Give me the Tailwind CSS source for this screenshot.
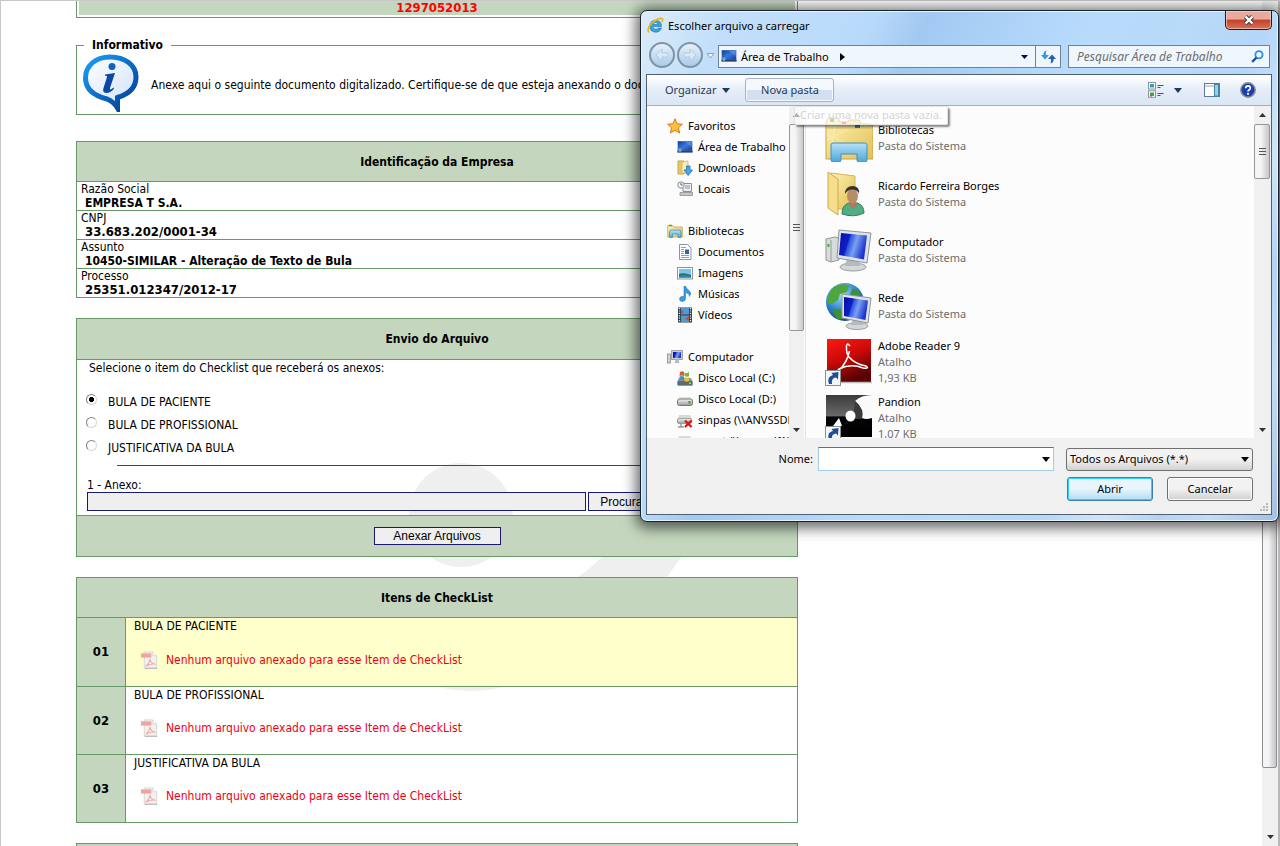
<!DOCTYPE html>
<html lang="pt-BR">
<head>
<meta charset="utf-8">
<title>Peticionamento - Envio de Arquivos</title>
<script src="https://cdn.jsdelivr.net/npm/@tailwindcss/browser@4"></script>
</head>
<body class="bg-white text-black">
<svg width="0" height="0" class="absolute" aria-hidden="true">
  <defs>
    <linearGradient id="gBubble" x1="0" y1="0" x2="1" y2="1"><stop offset="0" stop-color="#18a0f5"/><stop offset="1" stop-color="#023a96"/></linearGradient>
    <linearGradient id="gBubbleIn" x1="0" y1="0" x2="1" y2="1"><stop offset="0" stop-color="#ffffff"/><stop offset="1" stop-color="#cfe2fa"/></linearGradient>
    <linearGradient id="gFolder" x1="0" y1="0" x2="1" y2="1"><stop offset="0" stop-color="#fdf3b4"/><stop offset="1" stop-color="#e3bf52"/></linearGradient>
    <linearGradient id="gBlueTray" x1="0" y1="0" x2="0" y2="1"><stop offset="0" stop-color="#b8e2f6"/><stop offset="1" stop-color="#4ba6dc"/></linearGradient>
    <linearGradient id="gScreen" x1="0" y1="0" x2="1" y2=".3"><stop offset="0" stop-color="#0710a4"/><stop offset=".38" stop-color="#0f1fc4"/><stop offset=".42" stop-color="#2c50e0"/><stop offset=".65" stop-color="#7aa0f2"/><stop offset="1" stop-color="#1c36cc"/></linearGradient>
    <linearGradient id="gGray" x1="0" y1="0" x2="0" y2="1"><stop offset="0" stop-color="#f4f4f4"/><stop offset="1" stop-color="#9a9a9a"/></linearGradient>
    <linearGradient id="gRed" x1="0" y1="0" x2=".4" y2="1"><stop offset="0" stop-color="#fb1a12"/><stop offset=".5" stop-color="#cc0a08"/><stop offset="1" stop-color="#5a0303"/></linearGradient>
    <linearGradient id="gDark" x1="0" y1="0" x2="0" y2="1"><stop offset="0" stop-color="#3a3a3a"/><stop offset=".5" stop-color="#6a6a6a"/><stop offset=".52" stop-color="#050505"/><stop offset="1" stop-color="#000"/></linearGradient>
    <radialGradient id="gGlobe" cx=".4" cy=".3" r=".75"><stop offset="0" stop-color="#9bdcf8"/><stop offset=".6" stop-color="#2b7fd0"/><stop offset="1" stop-color="#10408c"/></radialGradient>
    <linearGradient id="gDesk" x1="0" y1="0" x2="1" y2="1"><stop offset="0" stop-color="#0e3a94"/><stop offset=".5" stop-color="#3a78dc"/><stop offset="1" stop-color="#123f9e"/></linearGradient>
    <symbol id="desk" viewBox="0 0 16 16"><rect x=".5" y="2" width="15" height="11.5" fill="#6f8fc4"/><rect x="1" y="2.500" width="14" height="9" fill="url(#gDesk)"/><rect x=".5" y="11.500" width="15" height="2" fill="#2c3f6c"/><path d="M8 3h6.500v5z" fill="#6da2ee" opacity=".5"/><circle cx="3" cy="11" r="1.800" fill="#3fb4e8"/><path d="M2 12.500l1-2 1 2z" fill="#f2a032"/></symbol>
    <symbol id="libs" viewBox="0 0 16 16"><path d="M.7 2.500h5l1 1.500h8.600v10H.7z" fill="url(#gFolder)" stroke="#c9a446" stroke-width=".8"/><path d="M2 2.500h3" stroke="#3aa648" stroke-width="1.500"/><path d="M2.500 14.500V9q0-2 2-2h7.500q2 0 2 2v5.500h-3V11h-5.500v3.500z" fill="url(#gBlueTray)" stroke="#3c8fc6" stroke-width=".8"/></symbol>
    <symbol id="driveNet" viewBox="0 0 16 16"><path d="M2 3h11l2 4v4H.5V7z" fill="#d9d9d9"/><rect x=".5" y="6.500" width="14" height="5" rx="1.500" fill="url(#gGray)" stroke="#888" stroke-width=".7"/><path d="M1 15h6M4 11v4" stroke="#999" stroke-width="1.500"/><path d="M8 8.500l6.500 6.500M14.500 8.500L8 15" stroke="#d01818" stroke-width="2.200"/></symbol>
    <symbol id="pdf" viewBox="0 0 20 20"><path d="M4.500 1.500h9l4 4v13h-13z" fill="#f2f1f0" stroke="#d8d6d4"/><path d="M13.500 1.500v4h4" fill="#fff" stroke="#d8d6d4"/><path d="M5 18.800h13" stroke="#bdbbb8" stroke-width="1.200"/><rect x="1" y="3" width="11" height="4.500" fill="#f3a49f"/><path d="M6 16.500q4-3 4.500-7.500q.8 4.500 6 5.500q-5.500-1-10.500 2z" fill="none" stroke="#f2aca6" stroke-width="1.200"/></symbol>
    <symbol id="lnk" viewBox="0 0 16 16"><rect x=".5" y=".5" width="15" height="15" fill="#f4f6f8" stroke="#8e8e8e"/><path d="M4 14Q1.500 6.500 8 5L6.500 3 13.500 2 13 9.500 11 7.500Q6 8 7 14z" fill="#1c4f96"/></symbol>
  </defs>
</svg>

<div class="relative flex h-screen overflow-hidden border-t border-l border-[#c8c8c8] font-['DejaVu_Sans_Condensed','DejaVu_Sans',sans-serif] text-[12px] leading-[14px]">
  <main class="relative isolate min-w-0 flex-1 pl-[75px]">
    <svg class="absolute left-[399px] top-[459px] -z-10" width="310" height="240" viewBox="400 460 310 240" fill="#efefef" aria-hidden="true">
      <circle cx="461" cy="515" r="52"/><path d="M603 556Q590 569 578 577V600H650Q662 584 682 556z"/><path d="M415 679Q470 703 528 679z"/>
    </svg>
    <div class="w-full max-w-[722px]">
      <div class="h-[17px] border-x border-b border-[#669966] px-[2px] pb-[2px]">
        <div class="h-full bg-[#c4d7be] text-center text-[13px] font-bold text-[#ff0000]">1297052013</div>
      </div>

      <fieldset class="mt-[20px] h-[77px] border border-[#669966] pl-[5px]">
        <legend class="ml-[2px] px-[8px] text-[12px] font-bold">Informativo</legend>
        <div class="flex items-center gap-[11px] pt-[2px]">
          <svg width="58" height="58" viewBox="0 0 58 58" class="shrink-0" role="img" aria-label="Informação">
            <path d="M28 3C13 3 3.500 12 3.500 24C3.500 34 11 41.500 25 45Q32 48 35.500 54V43.500Q54 38 54 23C54 11 43 3 28 3z" fill="url(#gBubbleIn)" stroke="url(#gBubble)" stroke-width="5"/>
            <circle cx="30" cy="12.500" r="3.500" fill="#1260c0"/>
            <path d="M23 20.500l10-1.500-5 15q-.8 3 3.500-.5l.5 1.200q-4 4.500-8 4.300-4-.5-2.500-5l3.500-11q.5-1.500-2-1.200z" fill="#0c48a4"/>
          </svg>
          <p class="pt-[3px] whitespace-nowrap">Anexe aqui o seguinte documento digitalizado. Certifique-se de que esteja anexando o documento correto.</p>
        </div>
      </fieldset>

      <table class="mt-[26px] w-full border-collapse border border-[#669966]">
        <thead><tr><th class="h-[40px] border border-[#669966] bg-[#c4d7be] text-[12px]">Identificação da Empresa</th></tr></thead>
        <tbody>
          <tr><td class="h-[29px] border border-[#669966] bg-white px-[4px]">Razão Social<div class="pl-[4px] text-[12px] font-bold">EMPRESA T S.A.</div></td></tr>
          <tr><td class="h-[29px] border border-[#669966] bg-white px-[4px]">CNPJ<div class="pl-[4px] text-[13px] font-bold">33.683.202/0001-34</div></td></tr>
          <tr><td class="h-[29px] border border-[#669966] bg-white px-[4px]">Assunto<div class="pl-[4px] text-[12px] font-bold">10450-SIMILAR - Alteração de Texto de Bula</div></td></tr>
          <tr><td class="h-[29px] border border-[#669966] bg-white px-[4px]">Processo<div class="pl-[4px] text-[13px] font-bold">25351.012347/2012-17</div></td></tr>
        </tbody>
      </table>

      <form class="mt-[20px] flex flex-col border border-[#669966]">
        <h2 class="flex h-[41px] items-center justify-center border-b border-[#669966] bg-[#c4d7be] text-[12px] font-bold">Envio do Arquivo</h2>
        <div class="flex h-[155px] flex-col">
          <p class="mt-px pl-[12px]">Selecione o item do Checklist que receberá os anexos:</p>
          <div class="mt-[15px] flex flex-col pl-[9px]">
            <label class="flex h-[23px] items-center gap-[11px]"><input type="radio" name="item" checked class="mb-[4px] h-[11px] w-[11px] appearance-none rounded-full border border-[#d8d8d8] border-t-[#808080] border-l-[#808080] bg-white bg-[radial-gradient(circle,#000_38%,#fff_45%)]">BULA DE PACIENTE</label>
            <label class="flex h-[23px] items-center gap-[11px]"><input type="radio" name="item" class="mb-[4px] h-[11px] w-[11px] appearance-none rounded-full border border-[#d8d8d8] border-t-[#808080] border-l-[#808080] bg-white">BULA DE PROFISSIONAL</label>
            <label class="flex h-[23px] items-center gap-[11px]"><input type="radio" name="item" class="mb-[4px] h-[11px] w-[11px] appearance-none rounded-full border border-[#d8d8d8] border-t-[#808080] border-l-[#808080] bg-white">JUSTIFICATIVA DA BULA</label>
          </div>
          <hr class="mt-[6px] ml-[40px] border-[#007800]">
          <label for="anexo" class="mt-[12px] pl-[10px]">1 - Anexo:</label>
          <div class="flex gap-[2px] pl-[10px]">
            <input id="anexo" type="text" class="h-[19px] w-[499px] border border-[#191970] bg-[#efefef]">
            <button type="button" class="h-[19px] w-[80px] border border-[#191970] bg-[#efefef] font-['Liberation_Sans',sans-serif] text-[12px] leading-[14px]">Procurar...</button>
          </div>
        </div>
        <div class="flex h-[41px] items-center justify-center border-t border-[#669966] bg-[#c4d7be]">
          <button type="button" class="h-[18px] w-[127px] border border-[#191970] bg-[#efefef] font-['Liberation_Sans',sans-serif] text-[12px] leading-[14px]">Anexar Arquivos</button>
        </div>
      </form>

      <table class="mt-[20px] w-full border-collapse border border-[#669966]">
        <thead><tr><th colspan="2" class="h-[40px] border border-[#669966] bg-[#c4d7be] text-[12px]">Itens de CheckList</th></tr></thead>
        <tbody>
          <tr>
            <th class="h-[69px] w-[49px] border border-[#669966] bg-[#c4d7be] text-[13px]">01</th>
            <td class="border border-[#669966] bg-[#ffffcc] px-[8px] pt-px align-top">BULA DE PACIENTE<div class="mt-[17px] flex items-center gap-[7px] pl-[6px] text-[#f00010]"><svg width="19" height="20"><use href="#pdf"/></svg>Nenhum arquivo anexado para esse Item de CheckList</div></td>
          </tr>
          <tr>
            <th class="h-[68px] w-[49px] border border-[#669966] bg-[#c4d7be] text-[13px]">02</th>
            <td class="border border-[#669966] px-[8px] pt-px align-top">BULA DE PROFISSIONAL<div class="mt-[16px] flex items-center gap-[7px] pl-[6px] text-[#f00010]"><svg width="19" height="20"><use href="#pdf"/></svg>Nenhum arquivo anexado para esse Item de CheckList</div></td>
          </tr>
          <tr>
            <th class="h-[68px] w-[49px] border border-[#669966] bg-[#c4d7be] text-[13px]">03</th>
            <td class="border border-[#669966] px-[8px] pt-px align-top">JUSTIFICATIVA DA BULA<div class="mt-[16px] flex items-center gap-[7px] pl-[6px] text-[#f00010]"><svg width="19" height="20"><use href="#pdf"/></svg>Nenhum arquivo anexado para esse Item de CheckList</div></td>
          </tr>
        </tbody>
      </table>
      <div class="mt-[20px] h-[41px] border border-[#669966] bg-[#c4d7be]"></div>
    </div>
  </main>

  <div class="flex w-[18px] shrink-0 flex-col border-r-2 border-[#b8b8b8] bg-[#f0f0f0]" aria-hidden="true">
    <div class="h-[17px]"></div>
    <div class="h-[750px] w-[15px] rounded-[2px] border border-[#8e8e8e] bg-linear-to-r from-[#f5f5f5] from-40% to-[#c4c4ca]"></div>
    <div class="flex flex-1 items-end justify-center pb-[7px]"><svg width="7" height="4"><path d="M0 0h7L3.500 4z" fill="#333"/></svg></div>
  </div>
</div>

<section role="dialog" aria-labelledby="dlgTitle" class="absolute top-[10px] right-[1px] flex h-[512px] w-[639px] flex-col rounded-[7px] border border-[#18222c] bg-[#b4d6f6] bg-[linear-gradient(115deg,#dcecf8_0%,#c2dffa_10%,#b8dafa_27%,#a2c9f2_33%,#aad0f6_40%,#b8dbfc_52%,#b9daf9_64%,#b4d6f8_72%,#d0e4f8_80%,#b4d3f4_86%,#c3dcf6_92%,#a4bfe0_100%)] pr-[6px] pb-[6px] pl-[5px] font-['Noto_Sans','Open_Sans',sans-serif] text-[11px] leading-[16px] shadow-[0_2px_14px_4px_rgba(0,0,0,0.6),inset_0_0_0_1px_#e6f4ff]">
  <header class="flex h-[30px] items-start justify-between">
    <div class="flex items-center gap-[4px] pt-[6px] pl-px">
      <svg width="17" height="17" viewBox="0 0 17 17" aria-hidden="true"><path d="M14.500 9.500H5.800Q6 12.300 8.800 12.300q1.800 0 2.600-1.300h3q-1.200 4.200-5.800 4.200Q3 15 2.700 9.200 2.900 3.500 8.500 3.200q6 .2 6 6.300zM5.900 7.500h5.300Q11 5.600 8.600 5.500 6.300 5.600 5.900 7.500z" fill="#35a3e0" stroke="#1a76b8" stroke-width=".6"/><path d="M1.800 15.500Q-.5 12 5 6.200 11 .6 15 1.500q1.500.8-.3 3.500" fill="none" stroke="#f0b418" stroke-width="1.700"/></svg>
      <h1 id="dlgTitle">Escolher arquivo a carregar</h1>
    </div>
    <button type="button" aria-label="Fechar" class="flex h-[19px] w-[47px] items-center justify-center rounded-b-[5px] border border-t-0 border-[#3c1010] bg-linear-to-b from-[#e8a99e] from-45% via-[#c4402a] via-50% to-[#d87058] shadow-[inset_0_0_0_1px_rgba(255,220,210,0.6)]">
      <svg width="12" height="10" viewBox="0 0 12 10"><path d="M2.500 1.500l7 7M9.500 1.500l-7 7" stroke="#4a3a48" stroke-width="4.400"/><path d="M2.500 1.500l7 7M9.500 1.500l-7 7" stroke="#fff" stroke-width="2.400"/></svg>
    </button>
  </header>

  <nav class="flex h-[33px] items-start pt-[1px] pr-[2px] pl-[3px]" aria-label="Endereço">
    <div class="flex gap-[2px]">
      <button type="button" aria-label="Voltar" class="flex h-[26px] w-[26px] items-center justify-center rounded-full border-2 border-[#7d93aa] bg-linear-to-b from-[#e8f1fa] to-[#a9cbe8]"><svg width="16" height="14" viewBox="0 0 16 14"><path d="M8 1L2 7l6 6v-4h6V5H8z" fill="#dbe9f7" stroke="#b4cbe2"/></svg></button>
      <button type="button" aria-label="Avançar" class="flex h-[26px] w-[26px] items-center justify-center rounded-full border-2 border-[#7d93aa] bg-linear-to-b from-[#e8f1fa] to-[#a9cbe8]"><svg width="16" height="14" viewBox="0 0 16 14"><path d="M8 1l6 6-6 6v-4H2V5h6z" fill="#dbe9f7" stroke="#b4cbe2"/></svg></button>
    </div>
    <svg width="9" height="6" class="mt-[11px] mr-[3px] ml-[3px] shrink-0"><path d="M1 .5h7L4.500 5z" fill="#eef6fd" stroke="#8aa6c2"/></svg>
    <div class="mt-[3px] flex h-[23px] min-w-0 flex-1 border border-[#6f8196] bg-[#eff6fd]">
      <svg width="16" height="16" class="mt-[2px] ml-[2px] shrink-0"><use href="#desk"/></svg>
      <span class="ml-[4px] self-center">Área de Trabalho</span>
      <svg width="5" height="8" class="ml-[11px] self-center"><path d="M0 0v8l5-4z"/></svg>
      <button type="button" aria-label="Locais anteriores" class="ml-auto flex w-[21px] items-center justify-center"><svg width="7" height="4"><path d="M0 0h7L3.500 4z" fill="#000060"/></svg></button>
      <button type="button" aria-label="Atualizar" class="flex w-[25px] items-center justify-center border-l border-[#6f8196]"><svg width="15" height="14" viewBox="0 0 15 14"><path d="M5.500 .5Q2 1.500 2.500 5H0L4 9.500 8 5H5Q4.500 2.500 5.500 .5z" fill="#2c9ae0"/><path d="M9.500 13.500q3.500-1 3-4.500H15L11 4.500 7 9h3q.5 2.500-.5 4.500z" fill="#1c5fb4"/></svg></button>
    </div>
    <div class="mt-[3px] ml-[7px] flex h-[23px] w-[202px] items-center border border-[#6f8196] bg-[#eff6fd] pr-[5px] pl-[8px] text-[12px]">
      <input type="search" aria-label="Pesquisar Área de Trabalho" placeholder="Pesquisar Área de Trabalho" class="min-w-0 flex-1 bg-transparent italic outline-none placeholder:text-[#6d6d6d]">
      <svg width="13" height="13" viewBox="0 0 13 13" fill="none"><circle cx="8" cy="4.800" r="3.600" stroke="#2e8fd4" stroke-width="1.800"/><path d="M5.500 7.500L1.200 11.800" stroke="#1a4fa0" stroke-width="2.400"/></svg>
    </div>
  </nav>

  <div class="flex min-h-0 flex-1 flex-col border border-[#51606e] bg-[#f0f0f0]">
    <div class="flex h-[31px] shrink-0 items-center border-b border-[#a0afc8] bg-linear-to-b from-[#fbfdff] from-10% via-[#e4edf8] via-50% to-[#dbe6f4] text-[#1e395b]">
      <button type="button" class="ml-[18px] flex items-center gap-[6px]">Organizar<svg width="8" height="5"><path d="M0 0h8L4 5z" fill="#1e395b"/></svg></button>
      <button type="button" class="ml-[15px] h-[24px] w-[89px] rounded-[3px] border border-[#a0b4cf] bg-linear-to-b from-[#f5f9fd] from-48% to-[#d3e0f0] to-52% shadow-[inset_0_0_0_1px_#f4f9fe]">Nova pasta</button>
      <div class="ml-auto flex items-center pr-[15px]">
        <button type="button" aria-label="Alterar o modo de exibição" class="flex items-center gap-[9px]">
          <svg width="17" height="16" viewBox="0 0 17 16"><rect x=".5" y=".5" width="7" height="6.500" fill="#fff" stroke="#8893a0"/><rect x="2" y="2" width="4" height="3.500" fill="#37a0a8"/><rect x=".5" y="8.800" width="7" height="6.500" fill="#fff" stroke="#8893a0"/><rect x="2" y="10.500" width="4" height="3.500" fill="#4aa23a"/><path d="M2 13h2v1.500H2z" fill="#d43"/><path d="M9.500 3.500h6M9.500 5.500h3M9.500 11.500h6M9.500 13.500h3" stroke="#3d5878"/></svg>
          <svg width="8" height="5"><path d="M0 0h8L4 5z" fill="#1e395b"/></svg>
        </button>
        <button type="button" aria-label="Mostrar painel de visualização" class="ml-[22px]"><svg width="16" height="14" viewBox="0 0 16 14"><rect x=".5" y=".5" width="15" height="13" fill="#fff" stroke="#5e7a98"/><path d="M1 3h14" stroke="#8fa6c0"/><rect x="10.500" y="1.500" width="4" height="11.500" fill="#8fd4ea" stroke="#4585a8"/></svg></button>
        <button type="button" aria-label="Ajuda" class="ml-[20px]"><svg width="16" height="16" viewBox="0 0 16 16" fill="none"><circle cx="8" cy="8" r="7.200" fill="#1d3fae" stroke="#8a8f98" stroke-width="1.500"/><path d="M5.700 6.300Q5.800 3.900 8 3.900t2.300 2.100q0 1.200-1.300 1.900-1 .6-1 1.600" stroke="#fff" stroke-width="1.700"/><circle cx="8" cy="11.800" r="1.100" fill="#fff"/></svg></button>
      </div>
    </div>

    <div class="flex min-h-0 flex-1 bg-[#fcfcfc]">
      <nav class="w-[142px] shrink-0 overflow-hidden pt-[9px] whitespace-nowrap" aria-label="Locais">
        <div class="flex h-[21px] items-center gap-[5px] pl-[20px]"><svg width="16" height="16" viewBox="0 0 16 16"><path d="M8 .8l2.100 5 5.300.4-4 3.500 1.300 5.300L8 12.200 3.300 15l1.300-5.300-4-3.500 5.300-.4z" fill="#fcc23a" stroke="#e0741a"/></svg><a href="#">Favoritos</a></div>
        <div class="flex h-[21px] items-center gap-[5px] pl-[30px]"><svg width="16" height="16" class="shrink-0"><use href="#desk"/></svg><a href="#">Área de Trabalho</a></div>
        <div class="flex h-[21px] items-center gap-[5px] pl-[30px]"><svg width="16" height="16" viewBox="0 0 16 16"><path d="M1 1h6v13H1z" fill="#e6c868" stroke="#c9a446"/><path d="M5 2l6-1v12H5z" fill="#fbeeb0" stroke="#d5b458" stroke-width=".8"/><path d="M9.500 6h3.500v4h2.500L11.200 15.500 7 10h2.500z" fill="#49a6ea" stroke="#1e6fba" stroke-width=".8"/></svg><a href="#">Downloads</a></div>
        <div class="flex h-[21px] items-center gap-[5px] pl-[30px]"><svg width="16" height="16" viewBox="0 0 16 16"><path d="M6 2.500h8.500v8H6z" fill="#eef0f2" stroke="#8a8f94"/><path d="M8 5h5M8 7h5" stroke="#7d94a8"/><path d="M3 11.500h12.500v3H3z" fill="#c2c6c8" stroke="#8a8f94" stroke-width=".8"/><circle cx="4" cy="4" r="3.200" fill="#f4f6f8" stroke="#8a9098"/><path d="M4 2v2h1.500" fill="none" stroke="#556"/></svg><a href="#">Locais</a></div>
        <div class="mt-[21px] flex h-[21px] items-center gap-[5px] pl-[20px]"><svg width="16" height="16"><use href="#libs"/></svg><a href="#">Bibliotecas</a></div>
        <div class="flex h-[21px] items-center gap-[5px] pl-[30px]"><svg width="16" height="16" viewBox="0 0 16 16"><path d="M2.500.5h8l3.500 3.500v11.500H2.500z" fill="#fff" stroke="#8c959e"/><path d="M4 3.500h5M4 5.500h3M4 7.500h3M4 9.500h3M4 11.500h8M4 13.500h8" stroke="#7fa0c4"/><rect x="8" y="5.500" width="4" height="4.500" fill="#2c62b0"/></svg><a href="#">Documentos</a></div>
        <div class="flex h-[21px] items-center gap-[5px] pl-[30px]"><svg width="16" height="16" viewBox="0 0 16 16"><rect x=".5" y="2.500" width="15" height="11.500" fill="#fff" stroke="#8a949e"/><rect x="2" y="4" width="12" height="8.500" fill="#7cc4ee"/><path d="M2 9q5-2 12 1v2.500H2z" fill="#24735e"/><path d="M2 11q6-2 12 .5v1H2z" fill="#2a86b4"/></svg><a href="#">Imagens</a></div>
        <div class="flex h-[21px] items-center gap-[5px] pl-[30px]"><svg width="16" height="16" viewBox="0 0 16 16"><path d="M8.500 0q.5 2.500 3.500 4.500t.5 6q.5-3-4-4v6.500q-.4 2.500-3.700 2.500Q2.500 15.300 2.500 13q.2-2.500 3.500-2.700h1V0z" fill="#3b9ae0" stroke="#1d6cb4" stroke-width=".5"/></svg><a href="#">Músicas</a></div>
        <div class="flex h-[21px] items-center gap-[5px] pl-[30px]"><svg width="16" height="16" viewBox="0 0 16 16"><rect x="1" y=".5" width="14" height="15" fill="#2f3a42"/><rect x="4" y="1" width="8" height="6.500" fill="#4f9bd2"/><rect x="4" y="8.500" width="8" height="6.500" fill="#4f9bd2"/><path d="M4 3l3 2-3 2zM12 9l-4 3 4 2z" fill="#b4573c"/><path d="M2.500 1v14M13.500 1v14" stroke="#e8eef2" stroke-width="1.300" stroke-dasharray="1.200 1.200"/></svg><a href="#">Vídeos</a></div>
        <div class="mt-[21px] flex h-[21px] items-center gap-[5px] pl-[20px]"><svg width="16" height="16" viewBox="0 0 16 16"><rect x=".5" y="5" width="3" height="9" fill="#cfd3d6" stroke="#888" stroke-width=".8"/><path d="M4.500 1.500h11v9h-11z" fill="#c9ced4" stroke="#8c9298" stroke-width=".8"/><rect x="6" y="3" width="8" height="6" fill="url(#gScreen)"/><path d="M8.500 10.500h3l1 3.500h-5z" fill="#b8bcc0"/></svg><a href="#">Computador</a></div>
        <div class="flex h-[21px] items-center gap-[5px] pl-[30px]"><svg width="16" height="16" viewBox="0 0 16 16"><path d="M2 8h12l1.500 3v4.500H.5V11z" fill="#8c98a0"/><rect x=".5" y="11" width="15" height="4.500" rx="1" fill="#5c6a74"/><rect x="12" y="12.500" width="2" height="1.500" fill="#5f6"/><path d="M3 2q2-1.500 4 0v4q-2-1-4.500 0z" fill="#e8552b"/><path d="M7.500 2.500Q10 4 12 2v4q-2 1.500-4.500 0z" fill="#78b43c"/><path d="M2.500 6.500q2-1 4.500 0v4q-2-1-4.500 0z" fill="#3c8fd8"/><path d="M7.500 7q2 1.500 4.500 0v4q-2 1.300-4.500 0z" fill="#f2bc24"/></svg><a href="#">Disco Local (C:)</a></div>
        <div class="flex h-[21px] items-center gap-[5px] pl-[30px]"><svg width="16" height="16" viewBox="0 0 16 16"><path d="M2.500 6h11l2 4H.5z" fill="#e2e2e2"/><rect x=".5" y="8" width="15" height="6.500" rx="2" fill="url(#gGray)" stroke="#777"/><rect x="11.500" y="10" width="2" height="2.500" fill="#3c9a2c"/></svg><a href="#">Disco Local (D:)</a></div>
        <div class="flex h-[21px] items-center gap-[5px] pl-[30px]"><svg width="16" height="16" class="shrink-0"><use href="#driveNet"/></svg><a href="#">sinpas (\\ANVSSDF)</a></div>
        <div class="flex h-[21px] items-center gap-[5px] pl-[30px]"><svg width="16" height="16" class="shrink-0"><use href="#driveNet"/></svg><a href="#">propt (\\anvssdf1)</a></div>
      </nav>
      <div class="flex w-[15px] shrink-0 flex-col bg-[#f0f0f0]" aria-hidden="true">
        <div class="flex h-[18px] items-center justify-center"><svg width="7" height="4"><path d="M0 4h7L3.500 0z" fill="#333"/></svg></div>
        <div class="flex h-[207px] flex-col items-center justify-center gap-[2px] rounded-[2px] border border-[#979797] bg-linear-to-r from-[#f5f5f5] from-40% to-[#c8c8cc]"><i class="h-px w-[7px] bg-[#555]"></i><i class="h-px w-[7px] bg-[#555]"></i><i class="h-px w-[7px] bg-[#555]"></i></div>
        <div class="flex flex-1 items-end justify-center pb-[6px]"><svg width="7" height="4"><path d="M0 0h7L3.500 4z" fill="#333"/></svg></div>
      </div>
      <ul class="ml-px min-w-0 flex-1 overflow-hidden border-l border-[#d6e5f5] pt-[4px] pl-[19px]">
        <li class="flex h-[56px] items-center gap-[5px]"><svg width="48" height="48" viewBox="0 0 48 48"><path d="M1 8l2-4h10l2 4h8l1-2h10l2 4h10l2 3v32H1z" fill="url(#gFolder)" stroke="#c9a446"/><path d="M1 14h46" stroke="#d9b85c"/><path d="M4 4h8" stroke="#e8cf7a"/><rect x="5" y="5" width="4" height="3" fill="#3aa648"/><rect x="17" y="8" width="4" height="3" fill="#d8452c"/><rect x="30" y="11" width="5" height="3" fill="#2a74b8"/><path d="M2 26l20-10M6 36l4-24M1 20l18 8" stroke="#fff" opacity=".35"/><path d="M6 46V31q0-2 2-2h32q2 0 2 2v15q0 2-2 2h-6q-2 0-2-2v-6H16v6q0 2-2 2H8q-2 0-2-2z" fill="url(#gBlueTray)" stroke="#3f8fc4"/></svg><div><div>Bibliotecas</div><div class="text-[#6d6d6d]">Pasta do Sistema</div></div></li>
        <li class="flex h-[56px] items-center gap-[5px]"><svg width="48" height="48" viewBox="0 0 48 48"><path d="M6 3l24 3v33H12z" fill="url(#gFolder)" stroke="#d5b458"/><path d="M3 2l10 7v36L3 38z" fill="#f6df8c" stroke="#cda94c"/><path d="M17 44q0-9 7-11h8q7 2 7 10-10 5-22 1z" fill="#4fae84" stroke="#2f7d5c"/><path d="M24 31h7l1 5-4 3-4-3z" fill="#a87c5c"/><ellipse cx="27.500" cy="26" rx="5.500" ry="7.500" fill="#b98c68"/><path d="M20 24q0-8 8-8 7 .5 6 8-1-4-6-4.500-5-.5-8 4.500z" fill="#333"/></svg><div><div>Ricardo Ferreira Borges</div><div class="text-[#6d6d6d]">Pasta do Sistema</div></div></li>
        <li class="flex h-[56px] items-center gap-[5px]"><svg width="48" height="48" viewBox="0 0 48 48"><path d="M1 13l9-2 4 1v22l-8 2-5-2z" fill="#d8dbdd" stroke="#8e9498"/><path d="M6 14v21" stroke="#999"/><rect x="2.500" y="18" width="2" height="3" fill="#3fae3c"/><ellipse cx="28" cy="41" rx="13" ry="4" fill="#d4d7da" stroke="#9aa0a4"/><path d="M22 32h11l2 8H20z" fill="#b5babd"/><path d="M14 4l32 3-4 30-30-5z" fill="#dfe3e7" stroke="#8e969c"/><path d="M16 7l26 2.500-3 24-25-4.500z" fill="url(#gScreen)"/></svg><div><div>Computador</div><div class="text-[#6d6d6d]">Pasta do Sistema</div></div></li>
        <li class="flex h-[56px] items-center gap-[5px]"><svg width="48" height="48" viewBox="0 0 48 48"><circle cx="20" cy="20" r="19" fill="url(#gGlobe)"/><path d="M9 5q9-5 15-1l-2 6-7 2-2 6-6 4-5-1q1-11 7-16z" fill="#4fa63c"/><path d="M28 6q6 3 8 8l-6 2-5-4zM8 26l8 2 2 8-4 2q-6-4-6-12z" fill="#3f8f34"/><ellipse cx="32" cy="44" rx="11" ry="3.500" fill="#d4d7da" stroke="#9aa0a4"/><path d="M28 36h8l2 7H26z" fill="#b5babd"/><path d="M17 12l29 4-3 25-26-5z" fill="#dfe3e7" stroke="#8e969c"/><path d="M19 15l24 3.500-2.500 19.500L19 34z" fill="url(#gScreen)"/></svg><div><div>Rede</div><div class="text-[#6d6d6d]">Pasta do Sistema</div></div></li>
        <li class="flex h-[56px] items-center gap-[5px]"><svg width="48" height="48" viewBox="0 0 48 48"><rect x="2" y="1" width="44" height="43" fill="url(#gRed)"/><path d="M2 44.500h45" stroke="#bbb" stroke-width="1.500"/><path d="M25 8Q22 4 21.500 8Q21 15 24 19Q30 26 41 28Q45 31 38 30Q26 25 14 31Q11 34 14 32Q22 25 24.500 13" fill="none" stroke="#fff" stroke-width="1.500"/><svg y="32" width="16" height="16"><use href="#lnk"/></svg></svg><div><div>Adobe Reader 9</div><div class="text-[#6d6d6d]">Atalho</div><div class="text-[#6d6d6d]">1,93 KB</div></div></li>
        <li class="flex h-[56px] items-center gap-[5px]"><svg width="48" height="48" viewBox="0 0 48 48"><rect x="1" y="1" width="46" height="42" fill="url(#gDark)"/><path d="M47 1v23q-6 2-10 0 1-11-7-17Q36 1 47 1z" fill="#fafafa"/><path d="M30 7q10 8 7 18h-9z" fill="#3a3a3a"/><ellipse cx="25.500" cy="22" rx="5" ry="5.500" fill="#fff"/><path d="M8 32l6-8 3 8z" fill="#fff"/><svg y="32" width="16" height="16"><use href="#lnk"/></svg></svg><div><div>Pandion</div><div class="text-[#6d6d6d]">Atalho</div><div class="text-[#6d6d6d]">1,07 KB</div></div></li>
      </ul>
      <div class="flex w-[17px] shrink-0 flex-col bg-[#f0f0f0] pr-px" aria-hidden="true">
        <div class="flex h-[18px] items-center justify-center"><svg width="7" height="4"><path d="M0 4h7L3.500 0z" fill="#333"/></svg></div>
        <div class="flex h-[55px] flex-col items-center justify-center gap-[2px] rounded-[2px] border border-[#979797] bg-linear-to-r from-[#f5f5f5] from-40% to-[#c8c8cc]"><i class="h-px w-[7px] bg-[#555]"></i><i class="h-px w-[7px] bg-[#555]"></i><i class="h-px w-[7px] bg-[#555]"></i></div>
        <div class="flex flex-1 items-end justify-center pb-[6px]"><svg width="7" height="4"><path d="M0 0h7L3.500 4z" fill="#333"/></svg></div>
      </div>
    </div>

    <footer class="relative h-[76px] shrink-0 pt-[9px] pr-[18px]">
      <div class="flex items-center justify-end">
        <label for="nome" class="mr-[5px]">Nome:</label>
        <div class="relative mr-[12px]">
          <input id="nome" type="text" class="block h-[24px] w-[236px] border border-[#a6cce8] border-t-[#3d7bad] bg-white px-[4px] outline-none">
          <svg width="8" height="5" class="absolute top-[10px] right-[4px]"><path d="M0 0h8L4 5z"/></svg>
        </div>
        <div class="relative">
          <select aria-label="Tipo de arquivo" class="block h-[23px] w-[187px] appearance-none rounded-[3px] border border-[#707070] bg-linear-to-b from-[#f2f2f2] from-48% to-[#d2d2d2] pl-[3px]"><option>Todos os Arquivos (*.*)</option></select>
          <svg width="8" height="5" class="absolute top-[9px] right-[4px]"><path d="M0 0h8L4 5z"/></svg>
        </div>
      </div>
      <div class="mt-[6px] flex justify-end gap-[14px]">
        <button type="button" class="h-[24px] w-[86px] rounded-[3px] border border-[#3c7fb1] bg-linear-to-b from-[#e8f5fc] from-48% to-[#b4dcf2] shadow-[inset_0_0_0_1px_#2fd0fb]">Abrir</button>
        <button type="button" class="h-[24px] w-[86px] rounded-[3px] border border-[#707070] bg-linear-to-b from-[#f2f2f2] from-48% to-[#d0d0d0] shadow-[inset_0_0_0_1px_#fafafa]">Cancelar</button>
      </div>
      <svg width="9" height="9" class="absolute right-[2px] bottom-[2px]" fill="#b8b8b8"><path d="M6 0h2v2H6zM3 3h2v2H3zM6 3h2v2H6zM0 6h2v2H0zM3 6h2v2H3zM6 6h2v2H6z"/></svg>
    </footer>
  </div>

  <div role="tooltip" class="absolute top-[95px] left-[153px] h-[19px] w-[154px] overflow-hidden rounded-[2px] border border-[#e4e4e4] bg-white/60 text-center whitespace-nowrap text-[#d8d4d4] shadow-[2px_2px_2px_rgba(0,0,0,0.45)]">Criar uma nova pasta vazia.</div>
</section>
</body>
</html>
